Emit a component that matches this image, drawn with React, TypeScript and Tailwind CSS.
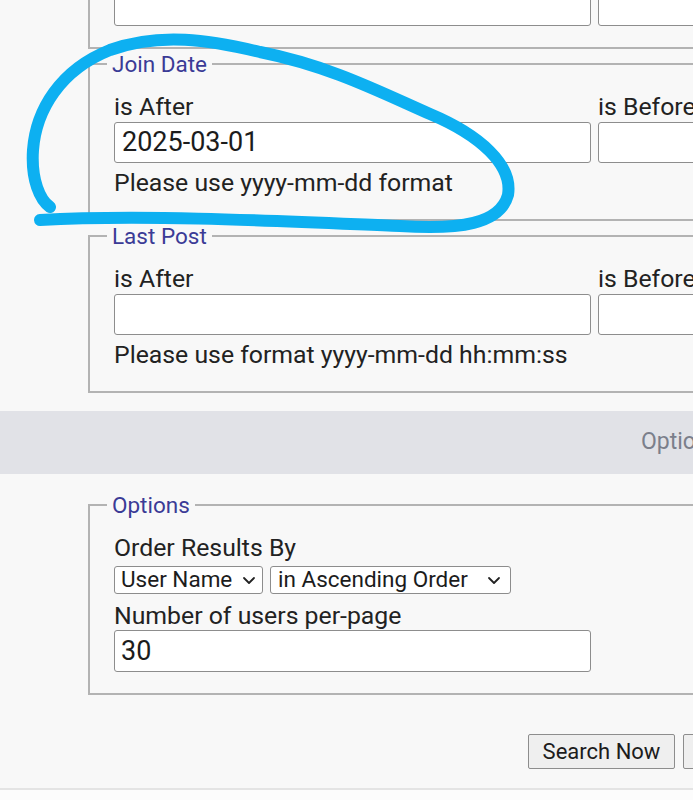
import React from "react";

const font = { fontFamily: "Roboto, 'Noto Sans', sans-serif" };

function DateField({ legend, hint, value }: { legend: string; hint: string; value?: string }) {
    return (
        <fieldset className="mt-[3px] border-2 border-[#b3b3b3] pl-[17px] pb-[22px]">
            <legend className="px-[5px] text-[22.5px] leading-[24px] text-[#3b3b96]">{legend}</legend>
            <div className="pl-[7px] pt-[17px] grid grid-cols-[477px_477px] gap-x-[7px]">
                <div>
                    <div className="text-[24.8px] leading-[28px] text-[#222]">is After</div>
                    <div className="mt-px h-[41px] bg-white border border-[#8d8d8d] rounded-[3px] px-[7px] flex items-center text-[27px] text-[#1c1c1c]">
                        {value}
                    </div>
                    <div className="mt-[6px] text-[24.8px] leading-[28px] text-[#222]">{hint}</div>
                </div>
                <div>
                    <div className="text-[24.8px] leading-[28px] text-[#222]">is Before</div>
                    <div className="mt-px h-[41px] bg-white border border-[#8d8d8d] rounded-[3px]" />
                </div>
            </div>
        </fieldset>
    );
}

function Chevron() {
    return (
        <svg width="14" height="9" viewBox="0 0 14 9" className="shrink-0">
            <path d="M2 2 L7 7 L12 2" fill="none" stroke="#222" strokeWidth="1.8" strokeLinecap="round" strokeLinejoin="round" />
        </svg>
    );
}

export default function App() {
    return (
        <div className="relative w-[693px] h-[800px] overflow-hidden bg-[#f8f8f8]" style={font}>
            <div className="w-[1100px]">
                <div className="pl-[88px]">
                    {/* tail of the previous fieldset */}
                    <div className="-mt-[15px] border-x-2 border-b-2 border-[#b3b3b3] pl-[24px] pb-[21px] grid grid-cols-[477px_477px] gap-x-[7px]">
                        <div className="h-[41px] bg-white border border-[#8d8d8d] rounded-[3px]" />
                        <div className="h-[41px] bg-white border border-[#8d8d8d] rounded-[3px]" />
                    </div>
                    <DateField legend="Join Date" value="2025-03-01" hint="Please use yyyy-mm-dd format" />
                    <DateField legend="Last Post" hint="Please use format yyyy-mm-dd hh:mm:ss" />
                </div>

                <div className="mt-[18px] h-[63px] bg-[#e1e2e7] flex items-center pl-[641px] text-[23px] text-[#7b7f8b]">
                    Options
                </div>

                <div className="pl-[88px] mt-[19px]">
                    <fieldset className="border-2 border-[#b3b3b3] pl-[17px] pb-[21px]">
                        <legend className="px-[5px] text-[22.5px] leading-[24px] text-[#3b3b96]">Options</legend>
                        <div className="pl-[7px] pt-[17px]">
                            <div className="text-[24.8px] leading-[28px] text-[#222]">Order Results By</div>
                            <div className="mt-[4px] flex gap-[7px]">
                                <div className="h-[28px] w-[149px] bg-white border border-[#8d8d8d] rounded-[3px] pl-[6px] pr-[6px] flex items-center justify-between text-[22.5px] text-[#1c1c1c]">
                                    <span>User Name</span>
                                    <Chevron />
                                </div>
                                <div className="h-[28px] w-[241px] bg-white border border-[#8d8d8d] rounded-[3px] pl-[7px] pr-[9px] flex items-center justify-between text-[22.5px] text-[#1c1c1c]">
                                    <span>in Ascending Order</span>
                                    <Chevron />
                                </div>
                            </div>
                            <div className="mt-[8px] text-[24.8px] leading-[28px] text-[#222]">Number of users per-page</div>
                            <div className="w-[477px] h-[42px] bg-white border border-[#8d8d8d] rounded-[3px] px-[6px] flex items-center text-[27px] text-[#1c1c1c]">
                                30
                            </div>
                        </div>
                    </fieldset>
                </div>

                <div className="mt-[39px] pl-[528px] flex gap-[8px]">
                    <div className="h-[35px] w-[147px] bg-[#efefef] border border-[#8d8d8d] rounded-[2px] flex items-center justify-center text-[22px] text-[#1c1c1c]">
                        Search Now
                    </div>
                    <div className="h-[35px] w-[90px] bg-[#efefef] border border-[#8d8d8d] rounded-[2px] flex items-center justify-center text-[22px] text-[#1c1c1c]">
                        Reset
                    </div>
                </div>

                <div className="mt-[19px] border-t-2 border-[#e4e4e4] h-[40px] bg-[#fcfcfc]" />
            </div>

            {/* hand-drawn highlight */}
            <svg className="absolute inset-0 pointer-events-none" width="693" height="800" viewBox="0 0 693 800">
                <path
                    d="M40 220 C150 214, 300 222, 400 226 C460 230, 500 224, 508 195 C513 165, 480 135, 430 114 C380 92, 330 66, 260 52 C210 40, 160 32, 110 50 C60 70, 36 110, 33 150 C31 180, 40 200, 50 207"
                    fill="none"
                    stroke="#0db0f1"
                    strokeWidth="12"
                    strokeLinecap="round"
                    strokeLinejoin="round"
                />
            </svg>
        </div>
    );
}
